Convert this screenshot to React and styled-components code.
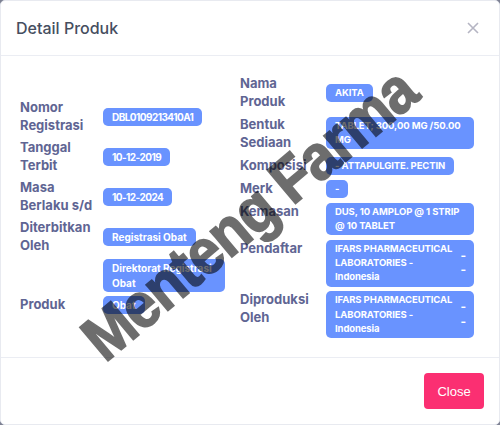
import React from "react";
import styled, { createGlobalStyle } from "styled-components";

const Global = createGlobalStyle`
  html, body { margin: 0; padding: 0; background: #7d8193; }
  * { box-sizing: border-box; }
`;

const Modal = styled.div`
  position: relative;
  width: 500px;
  height: 425px;
  background: #fff;
  border: 1px solid #e8eaf0;
  border-radius: 5px;
  overflow: hidden;
  display: flex;
  flex-direction: column;
  font-family: Inter, "Open Sans", sans-serif;
`;

const Header = styled.header`
  height: 55px;
  flex: none;
  border-bottom: 1px solid #ebedf3;
  display: flex;
  align-items: center;
  justify-content: space-between;
  padding: 0 19px 0 15px;
`;

const Title = styled.h5`
  margin: 0;
  font-size: 16px;
  font-weight: 500;
  color: #464e5f;
`;

const CloseIcon = styled.svg`
  width: 14px;
  height: 14px;
  color: #b5b5c3;
`;

const Body = styled.main`
  flex: 1;
  display: grid;
  grid-template-columns: 220px 235px;
  align-items: center;
  padding: 0 0 0 19px;
`;

const Column = styled.div`
  display: flex;
  flex-direction: column;
  gap: ${(p) => p.$gap}px;
`;

const Row = styled.div`
  display: grid;
  grid-template-columns: ${(p) => p.$label}px 1fr;
  align-items: start;
`;

const Label = styled.div`
  font-size: 13px;
  line-height: 18px;
  font-weight: 700;
  color: #5f6593;
  max-width: 74px;
  margin: -1px 0 1px;
`;

const Values = styled.div`
  display: flex;
  flex-direction: column;
  align-items: flex-start;
  gap: 13px;
  padding-top: ${(p) => p.$top || 0}px;
`;

const Badge = styled.div`
  background: #6993ff;
  color: #fff;
  font-size: ${(p) => (p.$tight ? 9.5 : 10)}px;
  font-weight: 700;
  letter-spacing: ${(p) => (p.$numeric ? "-0.55px" : p.$tight ? "-0.1px" : "0")};
  line-height: ${(p) => (p.$tight ? 14.25 : 15)}px;
  padding: ${(p) => (p.$tight ? "2px 9px" : "1.5px 9px")};
  border-radius: 5px;
  width: ${(p) => (p.$full ? "148px" : "fit-content")};
  max-width: ${(p) => (p.$tight ? "148px" : "122px")};
`;

const SplitBadge = styled(Badge)`
  display: flex;
  align-items: center;
  justify-content: space-between;
  gap: 1px;
  padding-right: 8px;
`;

const Dashes = styled.div`
  white-space: pre-line;
  font-size: 12px;
  flex: none;
`;

const Footer = styled.footer`
  height: 67px;
  flex: none;
  border-top: 1px solid #ebedf3;
  display: flex;
  justify-content: flex-end;
  align-items: flex-start;
  padding: 15px 15px 0 0;
`;

const CloseButton = styled.button`
  width: 60px;
  height: 36px;
  border: 0;
  border-radius: 4px;
  background: #fb2f72;
  color: #fff;
  font-family: "Liberation Sans", Arial, sans-serif;
  font-size: 13px;
`;

const Watermark = styled.div`
  position: absolute;
  left: 248px;
  top: 213px;
  transform: translate(-50%, -50%) rotate(-40deg) scale(1, 1.1);
  font-family: "Liberation Sans", Arial, sans-serif;
  font-weight: 700;
  font-size: 58px;
  letter-spacing: -1.2px;
  line-height: 1;
  white-space: nowrap;
  color: #000;
  -webkit-text-stroke: 1.5px #000;
  opacity: 0.57;
  pointer-events: none;
`;

const left = [
  ["Nomor Registrasi", ["DBL0109213410A1"], 9, true],
  ["Tanggal Terbit", ["10-12-2019"], 9, true],
  ["Masa Berlaku s/d", ["10-12-2024"], 9, true],
  ["Diterbitkan Oleh", ["Registrasi Obat", "Direktorat Registrasi Obat"], 9, false],
  ["Produk", ["Obat"], 0, false],
];

const ifars = "IFARS PHARMACEUTICAL LABORATORIES - Indonesia";

export default function App() {
  return (
    <Modal>
      <Global />
      <Header>
        <Title>Detail Produk</Title>
        <CloseIcon viewBox="0 0 14 14" fill="none" stroke="currentColor" strokeWidth="1.6">
          <path d="M2 2l10 10M12 2L2 12" />
        </CloseIcon>
      </Header>
      <Body>
        <Column $gap={4}>
          {left.map(([label, values, top, numeric]) => (
            <Row $label={83} key={label}>
              <Label>{label}</Label>
              <Values $top={top}>
                {values.map((v) => (
                  <Badge $numeric={numeric} key={v}>{v}</Badge>
                ))}
              </Values>
            </Row>
          ))}
        </Column>
        <Column $gap={4.75}>
          <Row $label={86}>
            <Label>Nama Produk</Label>
            <Values $top={9}>
              <Badge $tight>AKITA</Badge>
            </Values>
          </Row>
          <Row $label={86}>
            <Label>Bentuk Sediaan</Label>
            <Values $top={1}>
              <Badge $tight $full>TABLET; 300,00 MG /50.00 MG</Badge>
            </Values>
          </Row>
          <Row $label={86}>
            <Label>Komposisi</Label>
            <Values>
              <Badge $tight>- ATTAPULGITE. PECTIN</Badge>
            </Values>
          </Row>
          <Row $label={86}>
            <Label>Merk</Label>
            <Values>
              <Badge $tight>-</Badge>
            </Values>
          </Row>
          <Row $label={86}>
            <Label>Kemasan</Label>
            <Values>
              <Badge $tight $full>DUS, 10 AMPLOP @ 1 STRIP @ 10 TABLET</Badge>
            </Values>
          </Row>
          <Row $label={86}>
            <Label>Pendaftar</Label>
            <Values>
              <SplitBadge $tight $full>
                <span>{ifars}</span>
                <Dashes>{"-\n-"}</Dashes>
              </SplitBadge>
            </Values>
          </Row>
          <Row $label={86}>
            <Label>Diproduksi Oleh</Label>
            <Values>
              <SplitBadge $tight $full>
                <span>{ifars}</span>
                <Dashes>{"-\n-"}</Dashes>
              </SplitBadge>
            </Values>
          </Row>
        </Column>
      </Body>
      <Footer>
        <CloseButton>Close</CloseButton>
      </Footer>
      <Watermark>Menteng Farma</Watermark>
    </Modal>
  );
}
